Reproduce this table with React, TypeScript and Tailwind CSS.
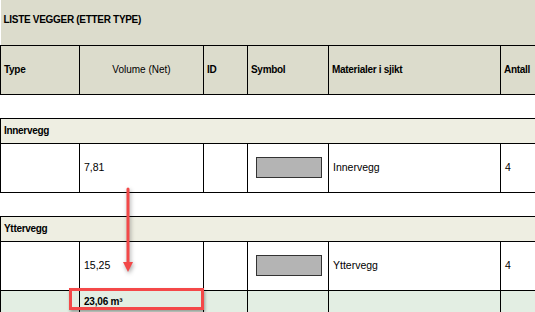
export default function App() {
  const cell = "border border-black px-[3px] align-middle"
  const head = `${cell} font-bold text-[10px] tracking-[-0.3px]`
  return (
    <div className="relative w-[535px] h-[312px] overflow-hidden bg-white font-['Liberation_Sans',Arial,sans-serif] text-[10.5px] text-black">
      <table className="table-fixed border-collapse w-[560px]">
        <colgroup>
          <col className="w-[79px]" />
          <col className="w-[124px]" />
          <col className="w-[44px]" />
          <col className="w-[81px]" />
          <col className="w-[172px]" />
          <col className="w-[60px]" />
        </colgroup>
        <tbody>
          <tr className="h-[45px] bg-[#dcdccc]">
            <td colSpan={6} className="px-[3px] pb-[5px] font-bold text-[10px] tracking-[-0.3px] align-middle">
              LISTE VEGGER (ETTER TYPE)
            </td>
          </tr>
          <tr className="h-[49px] bg-[#dcdccc]">
            <td className={head}>Type</td>
            <td className={`${cell} text-center text-[10px]`}>Volume (Net)</td>
            <td className={head}>ID</td>
            <td className={head}>Symbol</td>
            <td className={head}>Materialer i sjikt</td>
            <td className={head}>Antall</td>
          </tr>
          <tr className="h-[24px]">
            <td colSpan={6} />
          </tr>
          <tr className="h-[25px] bg-[#eeeee2]">
            <td colSpan={6} className="border border-black px-[3px] font-bold text-[10px] tracking-[-0.3px] align-middle">
              Innervegg
            </td>
          </tr>
          <tr className="h-[49px]">
            <td className={cell} />
            <td className={`${cell} pl-[4px]`}>7,81</td>
            <td className={cell} />
            <td className={`${cell} pl-[8px]`}>
              <div className="w-[66px] h-[21px] bg-[#b4b4b4] border border-[#333]" />
            </td>
            <td className={`${cell} pl-[4px]`}>Innervegg</td>
            <td className={`${cell} pl-[4px]`}>4</td>
          </tr>
          <tr className="h-[24px]">
            <td colSpan={6} />
          </tr>
          <tr className="h-[25px] bg-[#eeeee2]">
            <td colSpan={6} className="border border-black px-[3px] font-bold text-[10px] tracking-[-0.3px] align-middle">
              Yttervegg
            </td>
          </tr>
          <tr className="h-[49px]">
            <td className={cell} />
            <td className={`${cell} pl-[4px]`}>15,25</td>
            <td className={cell} />
            <td className={`${cell} pl-[8px]`}>
              <div className="w-[66px] h-[21px] bg-[#b4b4b4] border border-[#333]" />
            </td>
            <td className={`${cell} pl-[4px]`}>Yttervegg</td>
            <td className={`${cell} pl-[4px]`}>4</td>
          </tr>
          <tr className="h-[30px] bg-[#e3eee3]">
            <td className={cell} />
            <td className={`${cell} pl-[4px] pb-[8px] font-bold text-[10px] tracking-[-0.2px]`}>
              23,06 m³
            </td>
            <td className={cell} />
            <td className={cell} />
            <td className={cell} />
            <td className={cell} />
          </tr>
        </tbody>
      </table>

      {/* annotation arrow */}
      <svg className="absolute left-[118px] top-[186px] drop-shadow-[1px_2px_2px_rgba(0,0,0,0.35)]" width="20" height="90">
        <line x1="10" y1="3" x2="10" y2="78" stroke="#f24848" strokeWidth="3" strokeLinecap="round" />
        <polygon points="5,76 15,76 10,86" fill="#f24848" />
      </svg>
      {/* annotation box */}
      <div className="absolute left-[69px] top-[288px] w-[135px] h-[22px] border-[3px] border-[#f44848] shadow-[1px_2px_3px_rgba(0,0,0,0.35)]" />
    </div>
  )
}
